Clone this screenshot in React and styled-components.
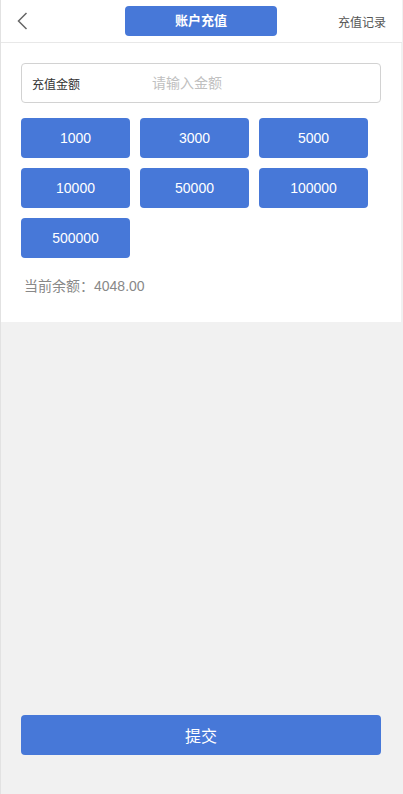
import React from "react";
import styled, { createGlobalStyle } from "styled-components";

const Global = createGlobalStyle`
  html, body { margin: 0; padding: 0; background: #f1f1f1; }
  body { font-family: "Liberation Sans", Arial, "Noto Sans CJK SC", sans-serif; }
  * { box-sizing: border-box; }
`;

const Page = styled.div`
  width: 402px;
  height: 794px;
  border-left: 1px solid #e2e2e2;
  display: flex;
  flex-direction: column;
  background: #f1f1f1;
`;

const Header = styled.div`
  height: 43px;
  background: #fff;
  border-bottom: 1px solid #e8e8e8;
  display: flex;
  align-items: center;
  justify-content: space-between;
  padding: 0 16px 0 16px;
  position: relative;
`;

const Back = styled.div`
  width: 20px;
  height: 20px;
  display: flex;
  align-items: center;
`;

const Title = styled.div`
  position: absolute;
  left: 124px;
  top: 6px;
  width: 152px;
  height: 30px;
  background: #4778d8;
  border-radius: 4px;
  color: #fff;
  font-size: 13px;
  font-weight: bold;
  display: flex;
  align-items: center;
  justify-content: center;
  padding-bottom: 3px;
`;

const Record = styled.div`
  font-size: 12px;
  color: #555;
  margin-top: 1px;
`;

const Panel = styled.div`
  background: #fff;
  width: 400px;
  padding: 20px 20px 0 20px;
  height: 279px;
`;

const InputBox = styled.div`
  height: 40px;
  border: 1px solid #d2d2d2;
  border-radius: 4px;
  display: flex;
  align-items: center;
  padding-left: 10px;
`;

const Label = styled.span`
  font-size: 12px;
  color: #333;
  width: 120px;
`;

const Input = styled.input`
  border: none;
  outline: none;
  font-size: 14px;
  font-family: inherit;
  color: #333;
  flex: 1;
  padding: 0;
  background: transparent;
  &::placeholder { color: #c0c0c0; }
`;

const Grid = styled.div`
  margin-top: 15px;
  display: grid;
  grid-template-columns: repeat(3, 109px);
  column-gap: 10px;
  row-gap: 10px;
`;

const Amount = styled.button`
  height: 40px;
  border: none;
  border-radius: 4px;
  background: #4778d8;
  color: #fff;
  font-size: 14px;
  font-family: inherit;
  padding: 0;
`;

const Balance = styled.div`
  margin-top: 17px;
  margin-left: 3px;
  font-size: 14px;
  color: #888;
`;

const Spacer = styled.div`
  flex: 1;
`;

const Submit = styled.button`
  margin: 0 0 39px 20px;
  width: 360px;
  height: 40px;
  border: none;
  border-radius: 4px;
  background: #4778d8;
  color: #fff;
  font-size: 16px;
  font-family: inherit;
`;

const amounts = ["1000", "3000", "5000", "10000", "50000", "100000", "500000"];

export default function App() {
  return (
    <>
      <Global />
      <Page>
        <Header>
          <Back>
            <svg width="11" height="18" viewBox="0 0 11 18">
              <path d="M9.5 1 L1.5 9 L9.5 17" fill="none" stroke="#666" strokeWidth="1.5" />
            </svg>
          </Back>
          <Title>账户充值</Title>
          <Record>充值记录</Record>
        </Header>
        <Panel>
          <InputBox>
            <Label>充值金额</Label>
            <Input placeholder="请输入金额" />
          </InputBox>
          <Grid>
            {amounts.map((a) => (
              <Amount key={a}>{a}</Amount>
            ))}
          </Grid>
          <Balance>当前余额：4048.00</Balance>
        </Panel>
        <Spacer />
        <Submit>提交</Submit>
      </Page>
    </>
  );
}
